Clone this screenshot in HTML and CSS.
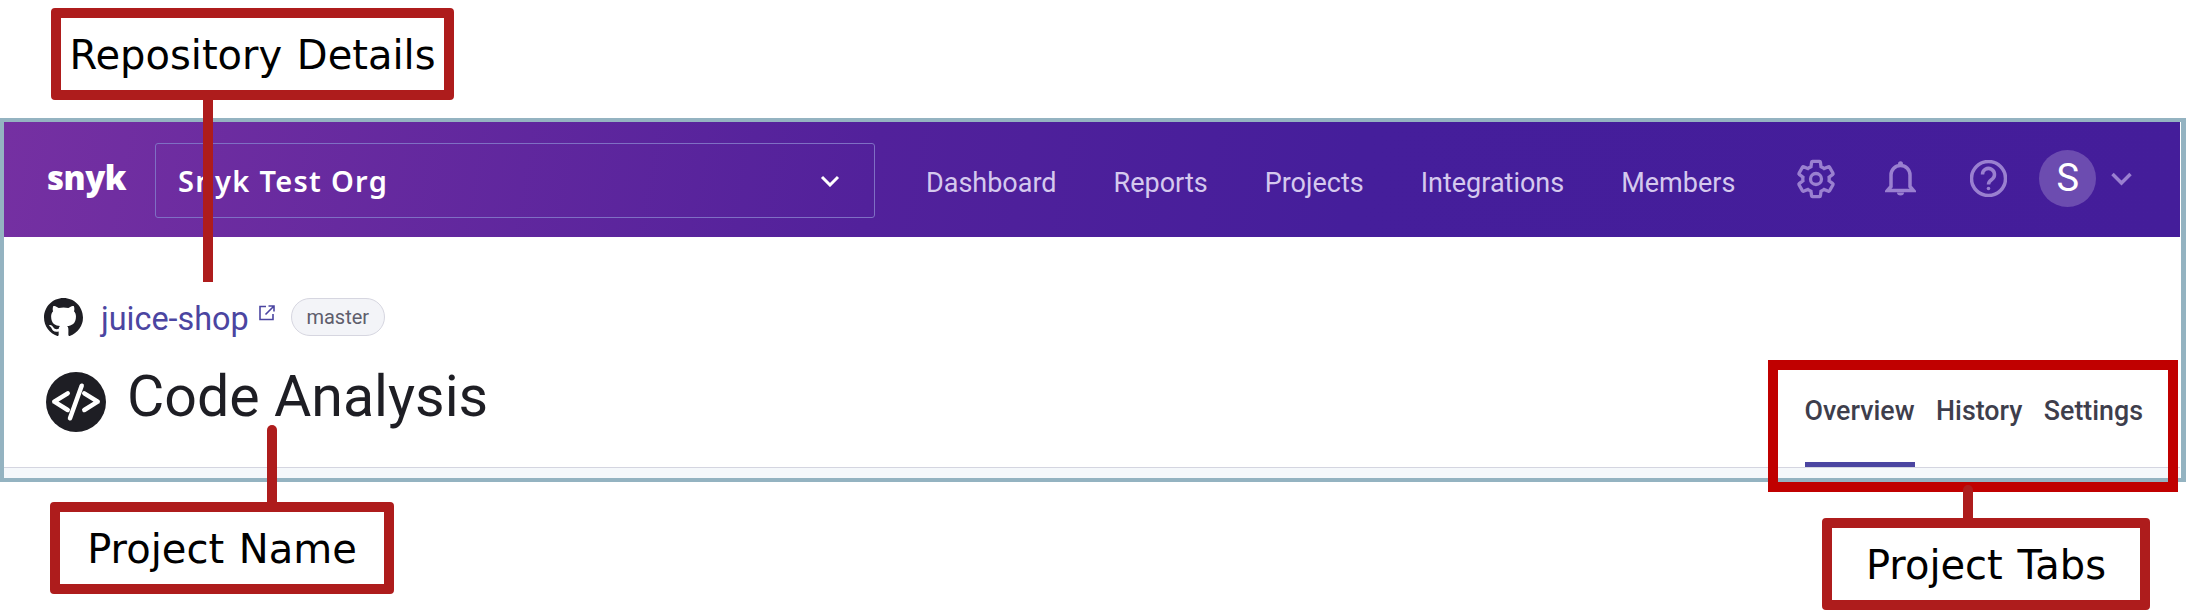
FILE: index.html
```html
<!DOCTYPE html>
<html lang="en">
<head>
<meta charset="utf-8">
<title>Code Analysis</title>
<link rel="stylesheet" href="styles.css">
</head>
<body>
<div class="frame">
  <nav class="nav">
    <span class="logo">snyk</span>
    <div class="org">
      <span class="org-name">Snyk Test Org</span>
      <svg class="org-chev" viewBox="0 0 20 12"><path d="M2 2l8 8 8-8"/></svg>
    </div>
    <div class="links">
      <a>Dashboard</a><a>Reports</a><a>Projects</a><a>Integrations</a><a>Members</a>
    </div>
    <svg class="ic-gear" viewBox="0 0 24 24"><path d="M19.14 12.94c.04-.3.06-.61.06-.94 0-.32-.02-.64-.07-.94l2.03-1.58c.18-.14.23-.41.12-.61l-1.92-3.32c-.12-.22-.37-.29-.59-.22l-2.39.96c-.5-.38-1.03-.7-1.62-.94l-.36-2.54c-.04-.24-.24-.41-.48-.41h-3.84c-.24 0-.43.17-.47.41l-.36 2.54c-.59.24-1.13.57-1.62.94l-2.39-.96c-.22-.08-.47 0-.59.22L2.74 8.87c-.12.21-.08.47.12.61l2.03 1.58c-.05.3-.09.63-.09.94s.02.64.07.94l-2.03 1.58c-.18.14-.23.41-.12.61l1.92 3.32c.12.22.37.29.59.22l2.39-.96c.5.38 1.03.7 1.62.94l.36 2.54c.05.24.24.41.48.41h3.84c.24 0 .44-.17.47-.41l.36-2.54c.59-.24 1.13-.56 1.62-.94l2.39.96c.22.08.47 0 .59-.22l1.92-3.32c.12-.22.07-.47-.12-.61l-2.01-1.58z"/><circle cx="12" cy="12" r="3"/></svg>
    <svg class="ic-bell" viewBox="0 0 31 35"><path class="stroke" d="M2.500 29.500L6 25.500V14a9.500 9.500 0 0 1 19 0v11.500l3.500 4z"/><circle class="fill" cx="15.500" cy="2.800" r="2.500"/><path class="fill" d="M12 31.500h7a3.500 3 0 0 1-7 0z"/></svg>
    <svg class="ic-help" viewBox="0 0 37 37"><circle class="stroke" cx="18.500" cy="18.500" r="17"/><path class="stroke" d="M12.500 14.500a6 6 0 1 1 9.500 4.800c-2 1.500-3.500 2.500-3.500 5.200"/><circle class="fill" cx="18.500" cy="28.500" r="1.800"/></svg>
    <span class="avatar">S</span>
    <svg class="ic-chev" viewBox="0 0 21 14"><path d="M1.500 2l9 9 9-9"/></svg>
  </nav>
  <header class="head">
    <div class="head-left">
      <div class="repo">
        <svg class="gh" viewBox="0 0 16 15.600"><path d="M8 0C3.580 0 0 3.580 0 8c0 3.540 2.290 6.530 5.470 7.590.4.070.55-.17.55-.38 0-.19-.01-.82-.01-1.490-2.010.37-2.530-.49-2.690-.94-.09-.23-.48-.94-.82-1.130-.28-.15-.68-.52-.01-.53.63-.01 1.080.58 1.230.82.72 1.210 1.870.87 2.330.66.07-.52.28-.87.51-1.070-1.780-.2-3.640-.89-3.640-3.950 0-.87.31-1.590.82-2.150-.08-.2-.36-1.020.08-2.120 0 0 .67-.21 2.200.82.64-.18 1.320-.27 2-.27.68 0 1.360.09 2 .27 1.530-1.040 2.200-.82 2.200-.82.44 1.100.16 1.920.08 2.120.51.56.82 1.270.82 2.150 0 3.070-1.870 3.750-3.650 3.950.29.25.54.73.54 1.480 0 1.070-.01 1.930-.01 2.200 0 .21.15.46.55.38A8.013 8.013 0 0 0 16 8c0-4.420-3.580-8-8-8z"/></svg>
        <a class="repo-name">juice-shop</a>
        <svg class="ext" viewBox="0 0 16 16"><path d="M7 1.500H1v13h13V9M9.500 1H15v5.500M15 1L6.500 9.500"/></svg>
        <span class="badge">master</span>
      </div>
      <div class="title-row">
        <svg class="code" viewBox="0 0 60 60"><circle cx="30" cy="30" r="30"/><path d="M21.700 21.300L8.300 29.700l13.400 8.300M38.300 21.300l13.400 8.400-13.400 8.300M35.700 13.700L24 46.300"/></svg>
        <h1>Code Analysis</h1>
      </div>
    </div>
    <div class="tabs">
      <a class="tab active">Overview</a><a class="tab">History</a><a class="tab">Settings</a>
    </div>
  </header>
  <div class="strip"></div>
</div>

<div class="callout repo-callout">Repository Details</div>
<div class="line repo-line"></div>
<div class="line name-line"></div>
<div class="callout name-callout">Project Name</div>
<div class="tab-mark"></div>
<div class="line tabs-line"></div>
<div class="callout tabs-callout">Project Tabs</div>
</body>
</html>
```
FILE: styles.css
```css
* { box-sizing: border-box; }
html, body { margin: 0; padding: 0; }
body {
  width: 2186px;
  height: 614px;
  padding-top: 118px;
  position: relative;
  overflow: hidden;
  background: #fff;
  font-family: Roboto, sans-serif;
}
.frame {
  height: 364px;
  border: 4px solid #94b3c1;
  border-right-width: 5px;
  padding-right: 1px;
  background: #fff;
}
.nav {
  height: 115px;
  display: flex;
  align-items: center;
  padding-left: 43px;
  background: linear-gradient(100deg, #7530a2 0%, #52219b 40%, #451e9b 62%, #441d9a 100%);
}
.logo {
  width: 108px;
  font-family: "Open Sans", sans-serif;
  font-weight: 800;
  font-size: 33px;
  letter-spacing: -0.5px;
  line-height: 40px;
  color: #fff;
  margin-top: -3px;
}
.org {
  width: 720px;
  height: 75px;
  margin-top: 2px;
  display: flex;
  align-items: center;
  justify-content: space-between;
  padding: 0 34px 0 22px;
  border: 1px solid #7f6fc4;
  border-radius: 3px;
}
.org-name {
  font-family: "Noto Sans", sans-serif;
  font-weight: 600;
  font-size: 29px;
  letter-spacing: 1.3px;
  color: #fff;
}
.org-chev { width: 20px; height: 12px; fill: none; stroke: #fff; stroke-width: 3; }
.links {
  display: flex;
  gap: 57px;
  margin: 6px 0 0 51px;
}
.links a {
  font-size: 27px;
  line-height: 32px;
  color: #d5c9ee;
}
.nav svg .stroke { fill: none; stroke: #9a80d0; stroke-width: 3.500; }
.nav svg .fill { fill: #9a80d0; }
.ic-gear {
  width: 44px;
  height: 44px;
  margin: -2px 0 0 59px;
  fill: none;
  stroke: #9a80d0;
  stroke-width: 1.800;
}
.ic-bell { width: 31px; height: 35px; margin: -2px 0 0 47px; }
.ic-help { width: 37px; height: 37px; margin: -2px 0 0 54px; }
.avatar {
  width: 57px;
  height: 57px;
  margin: -2px 0 0 32px;
  border-radius: 50%;
  background: #6c4cb0;
  color: #fff;
  font-size: 38px;
  line-height: 57px;
  text-align: center;
}
.ic-chev {
  width: 21px;
  height: 14px;
  margin: -2px 0 0 15px;
  fill: none;
  stroke: #9a80d0;
  stroke-width: 3.500;
}
.head {
  height: 231px;
  display: flex;
  justify-content: space-between;
  align-items: flex-end;
  padding: 0 37px 0 40px;
  border-bottom: 1px solid #d4d5e0;
}
.head-left { align-self: flex-start; padding-top: 61px; }
.repo { height: 38px; display: flex; align-items: center; }
.gh { width: 39px; height: 38px; fill: #1e1e24; }
.repo-name {
  margin: 4px 0 0 18px;
  font-size: 32.4px;
  line-height: 38px;
  color: #4b45a1;
}
.ext {
  width: 16px;
  height: 16px;
  margin: -8px 0 0 10px;
  fill: none;
  stroke: #4b45a1;
  stroke-width: 1.600;
}
.badge {
  width: 94px;
  height: 38px;
  margin-left: 16px;
  border: 1px solid #d6d6e0;
  border-radius: 19px;
  background: #f3f4f8;
  color: #5e5d6c;
  font-size: 20px;
  line-height: 37px;
  text-align: center;
}
.title-row {
  display: flex;
  align-items: center;
  height: 60px;
  margin: 36px 0 0 2px;
}
.code { width: 60px; height: 60px; fill: #1e1e24; }
.code path { fill: none; stroke: #fff; stroke-width: 4.500; stroke-linecap: round; stroke-linejoin: round; }
h1 {
  margin: -10px 0 0 21px;
  font-weight: 400;
  font-size: 57.3px;
  line-height: 60px;
  color: #1e1e24;
}
.tabs { display: flex; gap: 21.5px; }
.tab {
  padding-bottom: 35px;
  border-bottom: 5px solid transparent;
  font-weight: 500;
  font-size: 26.8px;
  line-height: 31px;
  color: #3e3e4c;
}
.tab.active { border-bottom-color: #4b45a1; }
.strip { height: 10px; background: #f5f8fb; }

.callout {
  position: absolute;
  height: 92px;
  display: flex;
  align-items: center;
  justify-content: center;
  border: 10px solid #ae1c1c;
  border-radius: 4px;
  background: #fff;
  color: #000;
  font-family: "DejaVu Sans", sans-serif;
  font-size: 40px;
  word-spacing: 2px;
  padding-top: 2px;
}
.repo-callout { left: 51px; top: 8px; width: 403px; }
.name-callout { left: 50px; top: 502px; width: 344px; }
.tabs-callout { left: 1822px; top: 518px; width: 328px; }
.line { position: absolute; width: 10px; background: #ae1c1c; }
.repo-line { left: 203px; top: 100px; height: 182px; }
.name-line { left: 267px; top: 425px; height: 78px; border-radius: 5px 5px 0 0; }
.tabs-line { left: 1963px; top: 485px; height: 34px; border-radius: 5px 5px 0 0; }
.tab-mark {
  position: absolute;
  left: 1768px;
  top: 360px;
  width: 410px;
  height: 132px;
  border: 10px solid #c00000;
}
```
